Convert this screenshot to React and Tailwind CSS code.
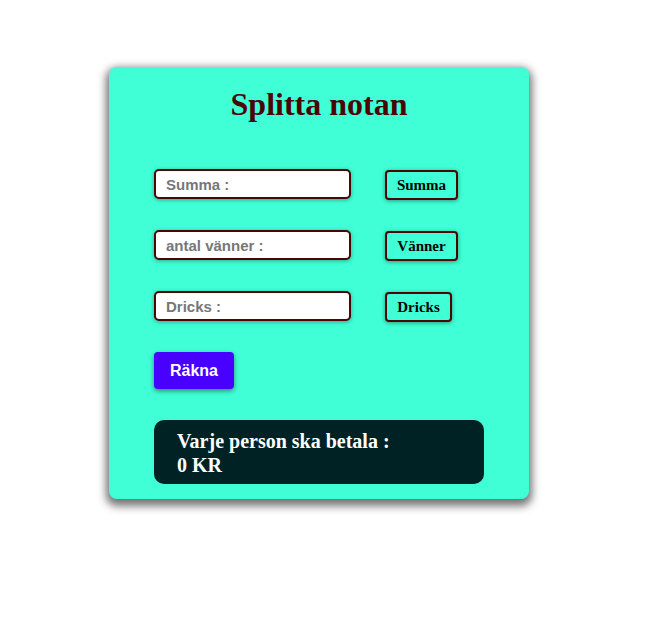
export default function App() {
  const rows = [
    { ph: "Summa :", btn: "Summa", w: "w-[73px]" },
    { ph: "antal vänner :", btn: "Vänner", w: "w-[73px]" },
    { ph: "Dricks :", btn: "Dricks", w: "w-[67px]" },
  ];
  return (
    <div className="w-[652px] h-[619px] bg-white pt-[67px] pl-[109px]">
      <div className="w-[420px] h-[432px] bg-[#40ffd6] rounded-[8px] shadow-[0_4px_8px_3px_rgba(0,0,0,0.55)] flex flex-col pl-[45px]">
        <h1 className="text-[32px] font-bold text-[#4a0505] text-center pr-[45px] mt-[19px] leading-[36px] font-['Liberation_Serif',serif]">
          Splitta notan
        </h1>
        <div className="flex flex-col gap-[30px] mt-[47px]">
          {rows.map((r) => (
            <div key={r.btn} className="flex items-start">
              <input
                placeholder={r.ph}
                className="w-[197px] h-[30px] bg-white border-2 border-[#4a0505] rounded-[5px] px-[10px] text-[15px] font-bold placeholder:text-[#777] shadow-[0_1px_4px_rgba(0,0,0,0.35)] outline-none font-['Liberation_Sans',Arial,sans-serif]"
              />
              <button
                className={`${r.w} h-[30px] ml-[34px] mt-[1px] bg-[#40ffd6] border-2 border-[#4a0505] rounded-[4px] text-[15px] font-bold text-black shadow-[0_1px_4px_rgba(0,0,0,0.4)] font-['Liberation_Serif',serif]`}
              >
                {r.btn}
              </button>
            </div>
          ))}
        </div>
        <button className="w-[80px] h-[37px] mt-[30px] bg-[#4800ff] text-white text-[16px] font-bold rounded-[4px] shadow-[0_2px_5px_rgba(0,0,0,0.45)] font-['Liberation_Sans',Arial,sans-serif]">
          Räkna
        </button>
        <div className="w-[330px] h-[64px] mt-[31px] bg-[#012225] rounded-[10px] pl-[23px] pt-[9px] text-white text-[20px] font-bold leading-[24px] font-['Liberation_Serif',serif]">
          <div>Varje person ska betala :</div>
          <div>0 KR</div>
        </div>
      </div>
    </div>
  );
}
